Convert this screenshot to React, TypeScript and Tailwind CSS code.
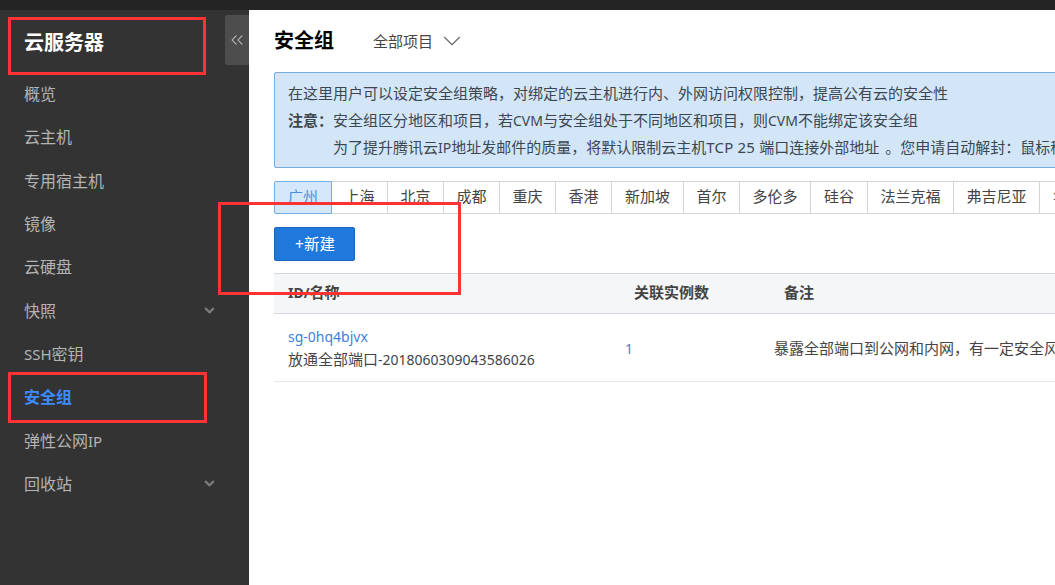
import { ChevronDown, ChevronsLeft } from "lucide-react";

const NAV = [
  { label: "概览" },
  { label: "云主机" },
  { label: "专用宿主机" },
  { label: "镜像" },
  { label: "云硬盘" },
  { label: "快照", arrow: true },
  { label: "SSH", rest: "密钥" },
  { label: "安全组", active: true },
  { label: "弹性公网", latin: "IP" },
  { label: "回收站", arrow: true },
];

const REGIONS = [
  { name: "广州", width: "w-[58px]", active: true },
  { name: "上海", width: "w-[56px]" },
  { name: "北京", width: "w-[56px]" },
  { name: "成都", width: "w-[56px]" },
  { name: "重庆", width: "w-[56px]" },
  { name: "香港", width: "w-[56px]" },
  { name: "新加坡", width: "w-[72px]" },
  { name: "首尔", width: "w-[56px]" },
  { name: "多伦多", width: "w-[71px]" },
  { name: "硅谷", width: "w-[57px]" },
  { name: "法兰克福", width: "w-[86px]" },
  { name: "弗吉尼亚", width: "w-[86px]" },
  { name: "华盛顿", width: "w-[72px]" },
];

// latin runs sit a px smaller than the CJK around them
function L({ children }: { children: string }) {
  return <span className="text-[14px]">{children}</span>;
}

function Sidebar() {
  return (
    <aside className="relative w-[249px] shrink-0 bg-[#333333]">
      <div className="flex h-[62.5px] items-center pl-6 pt-[3.5px] text-[20px] font-bold text-white">云服务器</div>
      {NAV.map((item) => (
        <div
          key={item.label}
          className={
            item.active
              ? "flex h-[43.3px] items-center justify-between pl-6 pr-[32px] text-[16px] font-bold text-[#3d8bff]"
              : "flex h-[43.3px] items-center justify-between pl-6 pr-[32px] text-[16px] text-[#b4b4b4]"
          }
        >
          <span>
            {item.rest ? <span className="text-[15px]">{item.label}</span> : item.label}
            {item.rest}
            {item.latin && <span className="text-[15px]">{item.latin}</span>}
          </span>
          {item.arrow && <ChevronDown size={15} strokeWidth={3.5} className="text-[#7a7a7a]" />}
        </div>
      ))}
      {/* collapse tab */}
      <div className="absolute right-0 top-[5px] flex h-[50px] w-6 items-center justify-center rounded-l-[2px] bg-[#4d4d4d]">
        <ChevronsLeft size={20} strokeWidth={1.25} className="text-[#c4c4c4]" />
      </div>
    </aside>
  );
}

function Main() {
  return (
    <main className="min-w-0 flex-1 overflow-hidden bg-white pl-[25px] text-[15px] text-[#444444]">
      <div className="flex h-[62px] items-center">
        <h1 className="text-[20px] font-bold text-black">安全组</h1>
        <span className="ml-[39px] text-[#444444]">全部项目</span>
        <ChevronDown size={30} strokeWidth={0.85} className="ml-[4px] text-[#666666]" />
      </div>

      <div className="mr-[-20px] h-[96px] whitespace-nowrap rounded-[2px] border border-[#74ade0] bg-[#d2e6f8] py-[7px] pl-[13px] leading-[26.6px] text-[#3c4650]">
        <p>在这里用户可以设定安全组策略，对绑定的云主机进行内、外网访问权限控制，提高公有云的安全性</p>
        <div className="flex">
          <b className="w-[45px] shrink-0">注意：</b>
          <p>
            安全组区分地区和项目，若<L>CVM</L>与安全组处于不同地区和项目，则<L>CVM</L>不能绑定该安全组
          </p>
        </div>
        <p className="pl-[45px]">
          为了提升腾讯云<L>IP</L>地址发邮件的质量，将默认限制云主机<span className="tracking-[0.2px]">TCP 25 </span>端口连接外部地址
          <span className="ml-[2px]"> 。</span>您申请自动解封：鼠标移至
        </p>
      </div>

      <div className="mt-[13px] flex h-[33px] w-[860px]">
        {REGIONS.map((r) => (
          <div
            key={r.name}
            className={
              r.active
                ? `${r.width} flex shrink-0 items-center justify-center rounded-l-[2px] border border-[#74ade0] bg-[#d5e8fb] pb-[2px] text-[#4a90e2]`
                : `${r.width} flex shrink-0 items-center justify-center border-y border-r border-[#d4d4d4] pb-[2px] text-[#444444]`
            }
          >
            {r.name}
          </div>
        ))}
      </div>

      <button className="mt-[13px] block h-[34px] w-[81px] rounded-[2px] border border-[#1767bd] bg-[#1f78dc] pl-[1px] pt-[1px] text-[15.5px] text-white">
        +新建
      </button>

      <div className="mt-3">
        <div className="flex h-[41px] items-center border-y border-[#d5d7df] bg-[#f5f6f8] pb-[2px] font-bold">
          <div className="w-[360px] shrink-0 pl-[14px]">
            <L>ID/</L>名称
          </div>
          <div className="w-[150px] shrink-0">关联实例数</div>
          <div>备注</div>
        </div>
        <div className="flex h-[68px] items-center whitespace-nowrap border-b border-[#e8e8ec] pt-[2px]">
          <div className="-mt-[2px] w-[351px] shrink-0 pl-[14px] leading-[23px]">
            <div className="text-[14px] text-[#3d7fe0]">sg-0hq4bjvx</div>
            <div>
              放通全部端口<L>-2018060309043586026</L>
            </div>
          </div>
          <div className="w-[149px] shrink-0 text-[14px] text-[#3d7fe0]">1</div>
          <div>暴露全部端口到公网和内网，有一定安全风险</div>
        </div>
      </div>
    </main>
  );
}

export default function App() {
  return (
    <div className="relative h-[585px] w-[1055px] overflow-hidden font-['Noto_Sans','Noto_Sans_CJK_SC',sans-serif]">
      <div className="h-[10px] bg-[#242424]" />
      <div className="flex h-[575px]">
        <Sidebar />
        <Main />
      </div>
      {/* annotation boxes drawn over the page */}
      <div className="absolute left-[8px] top-[17px] h-[58px] w-[198px] border-[3px] border-[#ff3333]" />
      <div className="absolute left-[8px] top-[372px] h-[51px] w-[199px] border-[3px] border-[#ff3333]" />
      <div className="absolute left-[218px] top-[202px] h-[93px] w-[243px] border-[3px] border-[#ff3333]" />
    </div>
  );
}
